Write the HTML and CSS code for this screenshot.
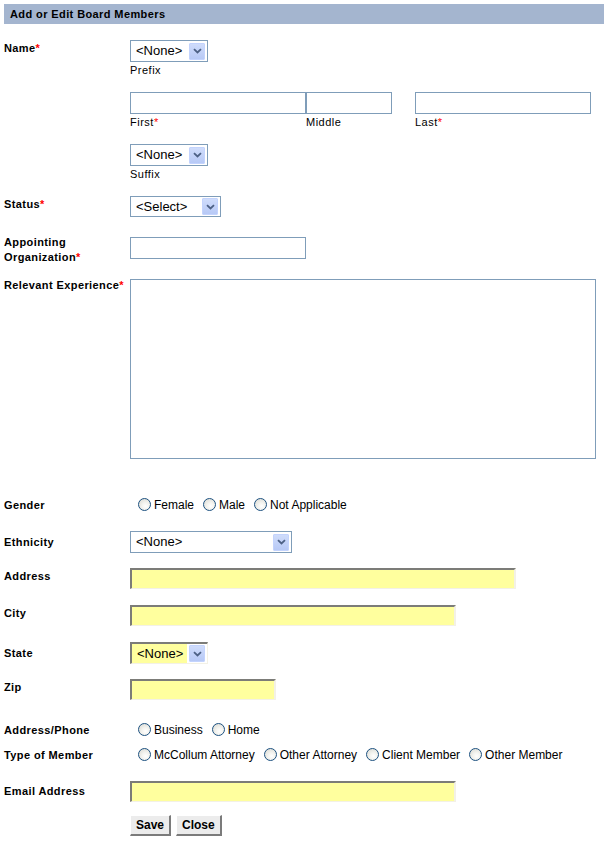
FILE: index.html
```html
<!DOCTYPE html>
<html lang="en">
<head>
<meta charset="utf-8">
<title>Add or Edit Board Members</title>
<link rel="stylesheet" href="styles.css">
</head>
<body>
<form class="board-form">
  <div class="title">Add or Edit Board Members</div>

  <div class="row row-name">
    <div class="label label-top">Name<span class="req">*</span></div>
    <div class="field">
      <div class="select sel-prefix"><span class="sel-text">&lt;None&gt;</span><span class="sel-btn"><svg viewBox="0 0 9 6" width="9" height="6"><path d="M1 1.2 L4.5 4.5 L8 1.2" fill="none" stroke="#4d6185" stroke-width="1.8"/></svg></span></div>
      <div class="caption">Prefix</div>
      <div class="name-parts">
        <div class="part part-first"><input class="txt" type="text"><div class="caption">First<span class="req">*</span></div></div>
        <div class="part part-middle"><input class="txt" type="text"><div class="caption">Middle</div></div>
        <div class="part part-last"><input class="txt" type="text"><div class="caption">Last<span class="req">*</span></div></div>
      </div>
      <div class="select sel-suffix"><span class="sel-text">&lt;None&gt;</span><span class="sel-btn"><svg viewBox="0 0 9 6" width="9" height="6"><path d="M1 1.2 L4.5 4.5 L8 1.2" fill="none" stroke="#4d6185" stroke-width="1.8"/></svg></span></div>
      <div class="caption">Suffix</div>
    </div>
  </div>

  <div class="row row-status">
    <div class="label label-top">Status<span class="req">*</span></div>
    <div class="select sel-status"><span class="sel-text">&lt;Select&gt;</span><span class="sel-btn"><svg viewBox="0 0 9 6" width="9" height="6"><path d="M1 1.2 L4.5 4.5 L8 1.2" fill="none" stroke="#4d6185" stroke-width="1.8"/></svg></span></div>
  </div>

  <div class="row row-org">
    <div class="label label-two">Appointing<br>Organization<span class="req">*</span></div>
    <input class="txt txt-org" type="text">
  </div>

  <div class="row row-exp">
    <div class="label">Relevant Experience<span class="req">*</span></div>
    <textarea class="area"></textarea>
  </div>

  <div class="row row-gender">
    <div class="label label-radio">Gender</div>
    <div class="radios">
      <label class="opt"><span class="radio"></span>Female</label>
      <label class="opt"><span class="radio"></span>Male</label>
      <label class="opt"><span class="radio"></span>Not Applicable</label>
    </div>
  </div>

  <div class="row row-eth">
    <div class="label label-center">Ethnicity</div>
    <div class="select sel-eth"><span class="sel-text">&lt;None&gt;</span><span class="sel-btn"><svg viewBox="0 0 9 6" width="9" height="6"><path d="M1 1.2 L4.5 4.5 L8 1.2" fill="none" stroke="#4d6185" stroke-width="1.8"/></svg></span></div>
  </div>

  <div class="row row-addr">
    <div class="label label-top">Address</div>
    <input class="yel yel-addr" type="text">
  </div>

  <div class="row row-city">
    <div class="label label-top">City</div>
    <input class="yel yel-city" type="text">
  </div>

  <div class="row row-state">
    <div class="label label-center">State</div>
    <div class="select select-yel sel-state"><span class="sel-text">&lt;None&gt;</span><span class="sel-btn"><svg viewBox="0 0 9 6" width="9" height="6"><path d="M1 1.2 L4.5 4.5 L8 1.2" fill="none" stroke="#4d6185" stroke-width="1.8"/></svg></span></div>
  </div>

  <div class="row row-zip">
    <div class="label label-top">Zip</div>
    <input class="yel yel-zip" type="text">
  </div>

  <div class="row row-phone">
    <div class="label label-radio">Address/Phone</div>
    <div class="radios">
      <label class="opt"><span class="radio"></span>Business</label>
      <label class="opt"><span class="radio"></span>Home</label>
    </div>
  </div>

  <div class="row row-type">
    <div class="label label-radio">Type of Member</div>
    <div class="radios">
      <label class="opt"><span class="radio"></span>McCollum Attorney</label>
      <label class="opt"><span class="radio"></span>Other Attorney</label>
      <label class="opt"><span class="radio"></span>Client Member</label>
      <label class="opt"><span class="radio"></span>Other Member</label>
    </div>
  </div>

  <div class="row row-email">
    <div class="label label-center">Email Address</div>
    <input class="yel yel-email" type="text">
  </div>

  <div class="row row-buttons">
    <div class="label"></div>
    <div class="buttons">
      <button type="button" class="btn">Save</button>
      <button type="button" class="btn">Close</button>
    </div>
  </div>
</form>
</body>
</html>
```

FILE: styles.css
```css
* { box-sizing: border-box; }

body {
  margin: 0;
  background: #fff;
  color: #000;
  font-family: "Liberation Sans", Arial, sans-serif;
}

.board-form {
  padding: 4px 10px 0 4px;
  width: 614px;
}

.title {
  width: 600px;
  height: 20px;
  background: #a4b5cf;
  padding-left: 6px;
  font-size: 11px;
  font-weight: bold;
  letter-spacing: 0.4px;
  line-height: 21px;
}

.row {
  display: flex;
  align-items: flex-start;
}

.label {
  width: 126px;
  flex: none;
  font-size: 11px;
  font-weight: bold;
  letter-spacing: 0.4px;
  line-height: 13px;
}

.label-top { padding-top: 2px; }
.label-center { align-self: center; }
.label-two { line-height: 14.5px; margin-top: -2px; }
.label-radio { line-height: 17px; }

.req { color: #f00; }

/* rows */
.row-name { margin-top: 16px; }
.row-status { margin-top: 14px; }
.row-org { margin-top: 20px; }
.row-exp { margin-top: 15px; }
.row-gender { margin-top: 38px; }
.row-eth { margin-top: 17px; }
.row-addr { margin-top: 15px; }
.row-city, .row-state { margin-top: 16px; }
.row-zip { margin-top: 15px; }
.row-phone { margin-top: 22px; }
.row-type { margin-top: 8px; }
.row-email { margin-top: 17px; }
.row-buttons { margin-top: 13px; }

.field { display: flex; flex-direction: column; align-items: flex-start; }

.caption {
  font-size: 11px;
  letter-spacing: 0.5px;
  line-height: 15px;
  padding-top: 1px;
  height: 16px;
}

.name-parts { display: flex; margin-top: 14px; margin-bottom: 14px; }
.part-first { width: 176px; }
.part-middle { width: 86px; }
.part-last { width: 176px; margin-left: 23px; }
.part .txt { width: 100%; }

/* text inputs */
.txt {
  display: block;
  height: 22px;
  border: 1px solid #7f9db9;
  background: #fff;
  margin: 0;
  padding: 0 3px;
  font: 12px "Liberation Sans", Arial, sans-serif;
}
.txt-org { width: 176px; }

.area {
  display: block;
  width: 466px;
  height: 180px;
  margin: 0;
  border: 1px solid #7f9db9;
  resize: none;
  background: #fff;
}

.yel {
  display: block;
  height: 21px;
  margin: 0;
  padding: 0 3px;
  background: #ffff9e;
  border-style: solid;
  border-width: 2px 2px 1px 2px;
  border-color: #7c7c78 #f3f1e6 #f3f1e6 #7c7c78;
  font: 12px "Liberation Sans", Arial, sans-serif;
}
.yel-addr { width: 386px; }
.yel-city { width: 326px; }
.yel-zip { width: 146px; }
.yel-email { width: 326px; }

/* selects */
.select {
  position: relative;
  display: flex;
  align-items: center;
  height: 22px;
  border: 1px solid #7f9db9;
  background: #fff;
}
.sel-prefix, .sel-suffix { width: 78px; }
.sel-status { width: 91px; height: 21px; }
.sel-eth { width: 162px; }
.sel-state { width: 78px; height: 22px; }

.sel-text {
  flex: 1;
  padding-left: 5px;
  font-size: 13px;
  line-height: 18px;
  white-space: nowrap;
}

.sel-btn {
  flex: none;
  width: 16px;
  height: 17px;
  margin-right: 2px;
  display: flex;
  align-items: center;
  justify-content: center;
  border: 1px solid #c3d3fd;
  border-radius: 1px;
  background: linear-gradient(#cfdcfb, #b7c9f6);
}

.select-yel {
  border-style: solid;
  border-width: 2px 1px 1px 2px;
  border-color: #7c7c78 #f3f1e6 #f3f1e6 #7c7c78;
  background: #fff;
}
.select-yel .sel-text {
  background: #ffff9e;
  align-self: stretch;
  line-height: 19px;
  margin-right: 2px;
}

/* radios */
.radios {
  display: flex;
  padding-left: 8px;
  gap: 9px;
  font-size: 12px;
  line-height: 17px;
}
.opt { display: flex; align-items: center; white-space: nowrap; }
.radio {
  width: 13px;
  height: 13px;
  margin-right: 3px;
  border-radius: 50%;
  border: 1px solid #1c5180;
  background: radial-gradient(circle at 60% 65%, #fff 0, #f4f4f0 35%, #d6d6cf 100%);
  position: relative;
  top: -1px;
}

/* buttons */
.buttons { display: flex; gap: 5px; }
.btn {
  height: 21px;
  margin: 0;
  padding: 0 5px;
  background: #ececec;
  border-style: solid;
  border-width: 1px 2px 2px 1px;
  border-color: #fff #7b7b7b #7b7b7b #fff;
  font: bold 12px "Liberation Sans", Arial, sans-serif;
  color: #000;
  line-height: 17px;
}
```
